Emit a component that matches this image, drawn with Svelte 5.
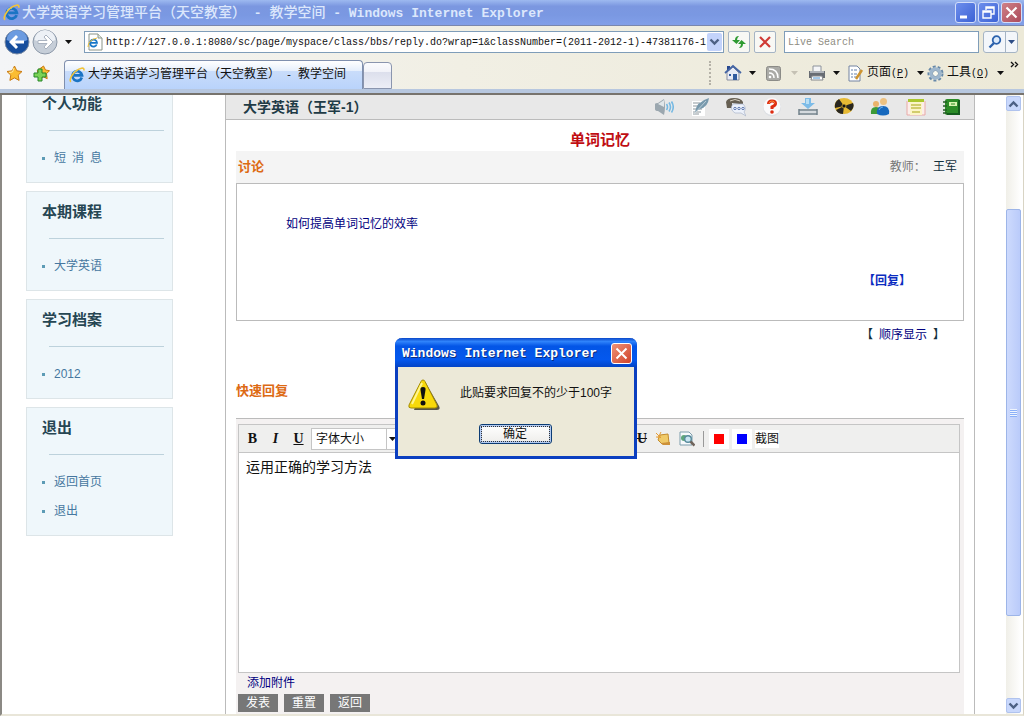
<script lang="ts">
	interface Card {
		title: string;
		links: string[];
	}

	const cards: Card[] = [
		{ title: '个人功能', links: ['短\u2002消\u2002息'] },
		{ title: '本期课程', links: ['大学英语'] },
		{ title: '学习档案', links: ['2012'] },
		{ title: '退出', links: ['返回首页', '退出'] }
	];

	const tools = [
		{ icon: 'speaker', label: '公告' },
		{ icon: 'note', label: '笔记' },
		{ icon: 'chat', label: '讨论' },
		{ icon: 'help', label: '答疑' },
		{ icon: 'download', label: '下载' },
		{ icon: 'radiation', label: '测试' },
		{ icon: 'people', label: '成员' },
		{ icon: 'list', label: '作业' },
		{ icon: 'book', label: '通讯录' }
	];

	let url = $state(
		'http://127.0.0.1:8080/sc/page/myspace/class/bbs/reply.do?wrap=1&classNumber=(2011-2012-1)-47381176-1'
	);
	let query = $state('');
	let reply = $state('运用正确的学习方法');
	let alertOpen = $state(true);

	function submit() {
		if (reply.length < 100) alertOpen = true;
	}
</script>

{#snippet ieLogo(size: number)}
	<svg width={size} height={size} viewBox="0 0 16 16" aria-hidden="true">
		<path d="M12.800 10.500A4.800 4.800 0 1 1 13 8.300H5" fill="none" stroke="#1b74c4" stroke-width="2.700" />
		<path d="M4 6.200q1.500-2.500 4.500-2.500" fill="none" stroke="#8fd4f7" stroke-width="1.200" />
		<path d="M2 14.800C-1 13 5 3 12.500 1.200q3-.6 2.300 2.300" fill="none" stroke="#f1c33a" stroke-width="1.600" />
	</svg>
{/snippet}

{#snippet caret(color: string)}
	<svg class="caret" width="7" height="4" viewBox="0 0 7 4" aria-hidden="true">
		<path d="M0 0h7L3.500 4z" fill={color} />
	</svg>
{/snippet}

{#snippet chevron(down: boolean)}
	<svg width="11" height="8" viewBox="0 0 11 8" aria-hidden="true">
		<path d={down ? 'M1.500 1.500l4 4 4-4' : 'M1.500 6.500l4-4 4 4'} fill="none" stroke="#4d6185" stroke-width="2.400" />
	</svg>
{/snippet}

{#snippet toolIcon(name: string)}
	<svg width="20" height="20" viewBox="0 0 20 20" aria-hidden="true">
		{#if name === 'speaker'}
			<path d="M1 7q0-1 3-1l6-4q2 8 0 16l-6-4q-3 0-3-2z" fill="#9ba7af" />
			<path d="M4 7l6-4v7z" fill="#e0e6e9" />
			<path d="M12.500 7q2 3 0 6M15 5.500q3 4.500 0 9M17.500 4.500q3.500 5.500 0 11" fill="none" stroke="#76b9e3" stroke-width="1.600" />
		{:else if name === 'note'}
			<path d="M2 4h13v15H2z" fill="#fff" />
			<path d="M3 6h7M3 9h8M3 12h9M3 15h8M3 17h6" stroke="#8d979d" />
			<path d="M5 15Q6 5 19 1q-1 9-9 11z" fill="#7899ac" />
			<path d="M4 17L16 4" stroke="#cbdbe3" stroke-width=".8" />
		{:else if name === 'chat'}
			<path d="M0 5q1-4 8-4t9 4v2h-4L6 6v5H1z" fill="#665f52" />
			<path d="M4 4q5-3 10 0" stroke="#d6cfc0" fill="none" />
			<path d="M7 7h10q4 4 1 8l2 4-5-3H9q-6-4-2-9z" fill="#edf2fb" stroke="#a9b5ca" stroke-width=".7" />
			<circle cx="9" cy="11.500" r="1.200" fill="#fff" stroke="#5874ae" />
			<circle cx="13" cy="11.500" r="1.200" fill="#fff" stroke="#5874ae" />
			<circle cx="17" cy="11.500" r="1.200" fill="#fff" stroke="#5874ae" />
		{:else if name === 'help'}
			<circle cx="10" cy="10.500" r="9" fill="#dde0e4" />
			<circle cx="10" cy="9.500" r="8.500" fill="#fafafb" />
			<path d="M6.500 7q0-3 3.500-3t3.500 2.500q0 2-3.500 3.500v2" fill="none" stroke="#dd2c12" stroke-width="3" />
			<path d="M7 6.500Q7.500 4 10 4t3 2.500" fill="none" stroke="#ff9d3d" stroke-width=".8" />
			<circle cx="10" cy="15" r="1.800" fill="#dd2c12" />
		{:else if name === 'download'}
			<path d="M7 1h6v5h4l-7 6-7-6h4z" fill="#7dbce8" />
			<path d="M8 2h3v5H8z" fill="#b9dff5" />
			<path d="M1 13h18M1 17h18" stroke="#71818b" stroke-width="1.500" />
			<path d="M2 15h16" stroke="#d5dade" stroke-width="2" />
			<path d="M1 12v6M19 12v6" stroke="#71818b" stroke-width="1.500" />
		{:else if name === 'radiation'}
			<ellipse cx="10" cy="9" rx="9.500" ry="8" fill="#e6b933" />
			<path d="M10 9L1 11q-1-6 4-9zM10 9l9-3q2 4-2 8zM10 9l-1 8q-5 0-7-4z" fill="#292720" />
			<circle cx="10" cy="9" r="2" fill="#141414" stroke="#e6b933" stroke-width=".7" />
		{:else if name === 'people'}
			<circle cx="6" cy="7" r="3" fill="#e9b36c" />
			<path d="M1 17q-1-7 5-7t6 7z" fill="#3d9a37" />
			<circle cx="13.500" cy="4.500" r="3.500" fill="#ecc181" />
			<path d="M7 17q-1-8 6-8t6 8q-6 3-12 0z" fill="#1668bd" />
			<path d="M9 13q1-3 4-3" stroke="#68b1ee" fill="none" />
		{:else if name === 'list'}
			<path d="M1 4v14h18V4" fill="#fbeeea" stroke="#e9aaa8" />
			<path d="M4 3h12v15H4z" fill="#fcf5c8" />
			<path d="M2 2h16v3H2z" fill="#abc72e" />
			<path d="M5 8h10M5 11h10M6 15h8" stroke="#c3c04d" stroke-width="1.500" />
		{:else}
			<rect x="3" y="2" width="15" height="16" rx="2" fill="#2c8c27" />
			<path d="M17 3v14H5" fill="none" stroke="#155e1d" stroke-width="2" />
			<path d="M7 5h8v4H7z" fill="#d7f3af" />
			<path d="M9 7h4" stroke="#2c8c27" />
			<path d="M1 5h4M1 9h4M1 13h4M1 16h4" stroke="#245c26" stroke-width="1.500" />
		{/if}
	</svg>
{/snippet}

<div class="window">
	<header class="titlebar">
		{@render ieLogo(17)}
		<h1>大学英语学习管理平台（天空教室）<span>&nbsp;-&nbsp;</span>教学空间<span>&nbsp;-&nbsp;Windows Internet Explorer</span></h1>
		<div class="window-buttons">
			<button type="button" aria-label="最小化">
				<svg width="19" height="19" viewBox="0 0 19 19"><path d="M4 14h7" stroke="#fff" stroke-width="3" /></svg>
			</button>
			<button type="button" aria-label="还原">
				<svg width="19" height="19" viewBox="0 0 19 19"><path d="M7 7V4h8v7h-3M4 8h8v7H4zM4 9h8M7 5h8" fill="none" stroke="#fff" stroke-width="1.400" /></svg>
			</button>
			<button type="button" class="close" aria-label="关闭">
				<svg width="19" height="19" viewBox="0 0 19 19"><path d="M4.500 4.500l10 10m0-10l-10 10" stroke="#fff" stroke-width="2.200" /></svg>
			</button>
		</div>
	</header>

	<div class="chrome">
		<div class="address-row">
			<div class="nav">
				<button type="button" aria-label="后退">
					<svg width="26" height="26" viewBox="0 0 26 26">
						<circle cx="13" cy="13" r="12" fill="#174e9d" stroke="#7d8da5" />
						<path d="M2.500 11a10.500 10 0 0 1 21 0q-10 5-21 0z" fill="#6b9be0" />
						<path d="M5 13l7-7 2 2-3 3.500h9v3h-9l3 3.500-2 2z" fill="#fff" />
					</svg>
				</button>
				<button type="button" aria-label="前进">
					<svg width="26" height="26" viewBox="0 0 26 26">
						<circle cx="13" cy="13" r="12" fill="#c6ced8" stroke="#8c98a8" />
						<path d="M2.500 11a10.500 10 0 0 1 21 0q-10 5-21 0z" fill="#edf1f6" />
						<path d="M21 13l-7-7-2 2 3 3.500H6v3h9l-3 3.500 2 2z" fill="#fff" stroke="#aab3c0" />
					</svg>
				</button>
				<button type="button" class="history" aria-label="历史记录">{@render caret('#111')}</button>
			</div>
			<div class="address">
				<svg class="page-icon" width="17" height="18" viewBox="0 0 17 18" aria-hidden="true">
					<path d="M3 1h9l4 4v12H3z" fill="#fff" stroke="#8a9488" />
					<path d="M12 1v4h4" fill="#e1eadb" stroke="#8a9488" />
					<path d="M10.700 11.500A3.500 3.500 0 1 1 11 9.800H5" fill="none" stroke="#1676c8" stroke-width="1.800" />
					<path d="M2 14Q2 7 11 5" fill="none" stroke="#edbf35" />
				</svg>
				<input type="text" aria-label="地址" bind:value={url} />
				<button type="button" aria-label="展开地址">{@render chevron(true)}</button>
			</div>
			<button type="button" class="square" aria-label="刷新">
				<svg width="16" height="16" viewBox="0 0 16 16"><path d="M8 2q-4 0-4 4H1l4.500 4L9 6H6q0-2 2-4zM8 14q4 0 4-4h3l-4.500-4L7 10h3q0 2-2 4z" fill="#2f9b32" /></svg>
			</button>
			<button type="button" class="square" aria-label="停止">
				<svg width="14" height="14" viewBox="0 0 14 14"><path d="M2 2l10 10M12 2L2 12" stroke="#cf3a35" stroke-width="2.200" /></svg>
			</button>
			<input class="search" type="text" placeholder="Live Search" aria-label="搜索" bind:value={query} />
			<div class="search-buttons">
				<button type="button" aria-label="搜索">
					<svg width="14" height="14" viewBox="0 0 14 14"><circle cx="8.500" cy="5" r="3.800" fill="#dceafb" stroke="#2c62ad" stroke-width="1.800" /><path d="M6 8l-4.500 4.500" stroke="#2c62ad" stroke-width="2.400" /></svg>
				</button>
				<button type="button" aria-label="搜索选项">{@render caret('#2d4d86')}</button>
			</div>
		</div>

		<div class="tab-row">
			<div class="favorites">
				<button type="button" aria-label="收藏中心">
					<svg width="17" height="17" viewBox="0 0 17 17"><path d="M8.500 1l2.300 4.800 5.200.7-3.800 3.600.9 5.300-4.600-2.500-4.600 2.500.9-5.300L1 6.500l5.200-.7z" fill="#fbbd32" stroke="#c97a13" /><path d="M8 3L6.500 7 3 7.500" stroke="#ffeaa0" fill="none" /></svg>
				</button>
				<button type="button" aria-label="添加到收藏夹">
					<svg width="17" height="17" viewBox="0 0 17 17"><path d="M10.500 1l2 4 4 .7-3 3 .7 5-4-2-3 2-3-8z" fill="#fbbd32" stroke="#c97a13" /><path d="M5 4h4v4h4v4H9v4H5v-4H1V8h4z" fill="#7bd255" stroke="#278728" /></svg>
				</button>
			</div>
			<div class="tab">
				{@render ieLogo(16)}
				<span class="tab-title">大学英语学习管理平台（天空教室）<span>&nbsp;-&nbsp;</span>教学空间</span>
			</div>
			<button type="button" class="new-tab" aria-label="新选项卡"></button>
			<div class="commands">
				<button type="button" class="home" aria-label="主页">
					<svg width="18" height="18" viewBox="0 0 18 18"><path d="M3 2h3v6H3z" fill="#27488e" /><path d="M3 8l6-5 6 6v7H3z" fill="#e8ebf5" stroke="#8a8fa0" /><path d="M1 9l8-7 8 7" fill="none" stroke="#4465a4" stroke-width="1.800" /><path d="M9 10h4v6H9z" fill="#315b9f" /><path d="M5 10h2v2H5z" fill="#315b9f" /></svg>
					{@render caret('#111')}
				</button>
				<button type="button" class="feed" aria-label="源">
					<svg width="15" height="15" viewBox="0 0 15 15"><rect x=".5" y=".5" width="14" height="14" rx="2" fill="#aaaaa6" stroke="#8b8b87" /><path d="M3 7q5 0 5 5M3 3q9 0 9 9" fill="none" stroke="#fff" stroke-width="1.500" /><circle cx="4" cy="11" r="1.300" fill="#fff" /></svg>
					{@render caret('#c5c1b4')}
				</button>
				<button type="button" class="print" aria-label="打印">
					<svg width="18" height="18" viewBox="0 0 18 18"><path d="M5 2h8v6H5z" fill="#f4f5f7" stroke="#8c929b" /><path d="M1 7h16v7H1z" fill="#686c73" /><path d="M2 8h14" stroke="#aeb2b8" stroke-width="2" /><path d="M4 12h10l1 4H3z" fill="#fff" stroke="#84878c" /><path d="M5 14h7" stroke="#4d91cf" /></svg>
					{@render caret('#111')}
				</button>
				<button type="button" class="page">
					<svg width="17" height="17" viewBox="0 0 17 17" aria-hidden="true"><path d="M2 1h8l3 3v12H2z" fill="#fff" stroke="#7283a1" /><path d="M4 5h2m1 0h3M4 9h2m1 0h3M4 12h2m1 0h3" stroke="#6480ad" /><path d="M15 5l-6 9" stroke="#cf942f" stroke-width="2.500" /></svg>
					<span>页面<i>(<u>P</u>)</i></span>
					{@render caret('#111')}
				</button>
				<button type="button" class="extras">
					<svg width="17" height="17" viewBox="0 0 17 17" aria-hidden="true"><circle cx="8.500" cy="8.500" r="7" fill="none" stroke="#6688a8" stroke-width="2" stroke-dasharray="3 2" /><circle cx="8.500" cy="8.500" r="4.700" fill="#f3f6f9" stroke="#9db6cd" stroke-width="3" /><circle cx="8.500" cy="8.500" r="3" fill="#faf9ee" stroke="#7895af" /></svg>
					<span>工具<i>(<u>O</u>)</i></span>
					{@render caret('#111')}
				</button>
				<button type="button" class="more" aria-label="更多">
					<svg width="9" height="8" viewBox="0 0 9 8"><path d="M1 1l2.500 2.500L1 6M5 1l2.500 2.500L5 6" fill="none" stroke="#111" stroke-width="1.400" /></svg>
				</button>
			</div>
		</div>
	</div>

	<div class="viewport">
		<div class="document">
			<nav class="sidebar">
				{#each cards as card}
					<section class="card">
						<h2>{card.title}</h2>
						<ul>
							{#each card.links as link}
								<li><a href="#top">{link}</a></li>
							{/each}
						</ul>
					</section>
				{/each}
			</nav>

			<main>
				<div class="course-bar">
					<h2>大学英语（王军-1）</h2>
					<div class="tools">
						{#each tools as tool}
							<button type="button" aria-label={tool.label}>{@render toolIcon(tool.icon)}</button>
						{/each}
					</div>
				</div>
				<div class="board">
					<h3 class="topic">单词记忆</h3>
					<div class="discussion-head">
						<h4>讨论</h4>
						<p>教师： <b>王军</b></p>
					</div>
					<article>
						<a class="question" href="#topic">如何提高单词记忆的效率</a>
						<a class="answer" href="#reply">【回复】</a>
					</article>
					<p class="order">【&ensp;<a href="#order">顺序显示</a>&ensp;】</p>
					<h4 class="quick-title">快速回复</h4>
					<form class="quick" id="reply" onsubmit={(e) => { e.preventDefault(); submit(); }}>
						<div class="editor">
							<div class="editor-bar">
								<button type="button" class="bold" aria-label="粗体">B</button>
								<button type="button" class="italic" aria-label="斜体">I</button>
								<button type="button" class="underline" aria-label="下划线">U</button>
								<span class="size">
									<select aria-label="字体大小"><option>字体大小</option></select>
									{@render caret('#111')}
								</span>
								<button type="button" class="strike" aria-label="删除线">U</button>
								<button type="button" class="insert" aria-label="清除格式">
									<svg width="16" height="16" viewBox="0 0 16 16"><path d="M5 4l8-1 1 9-7 1-4-4z" fill="#f0ca68" stroke="#c38b2e" /><path d="M6 12l9-1v3H8z" fill="#cd9139" /><path d="M1 2l5 5M6 1L3 7M1 6h5" stroke="#e59d35" /></svg>
								</button>
								<button type="button" class="insert" aria-label="预览">
									<svg width="16" height="16" viewBox="0 0 16 16"><path d="M1 1h9l3 3v10H1z" fill="#f7fafc" stroke="#7d9dac" /><circle cx="5" cy="7" r="3" fill="#5da67c" /><circle cx="9" cy="8" r="3.300" fill="#c9e6f2" stroke="#568a9b" stroke-width="1.400" /><path d="M11.500 10.500l4 4" stroke="#70645b" stroke-width="2.500" /></svg>
								</button>
								<span class="divider"></span>
								<button type="button" class="swatch red" aria-label="红色"></button>
								<button type="button" class="swatch blue" aria-label="蓝色"></button>
								<button type="button" class="shot">截图</button>
							</div>
							<textarea aria-label="回复内容" bind:value={reply}></textarea>
						</div>
						<a class="attach" href="#attach">添加附件</a>
						<div class="actions">
							<button type="submit">发表</button>
							<button type="reset">重置</button>
							<button type="button">返回</button>
						</div>
					</form>
				</div>
			</main>
		</div>

		<div class="scrollbar">
			<button type="button" aria-label="向上滚动">{@render chevron(false)}</button>
			<div class="track"><div class="thumb"><i></i></div></div>
			<button type="button" aria-label="向下滚动">{@render chevron(true)}</button>
		</div>
	</div>

	{#if alertOpen}
		<div class="alert" role="alertdialog" aria-labelledby="alert-title" aria-describedby="alert-text">
			<div class="alert-title">
				<h2 id="alert-title">Windows Internet Explorer</h2>
				<button type="button" aria-label="关闭对话框" onclick={() => (alertOpen = false)}>
					<svg width="19" height="19" viewBox="0 0 19 19"><path d="M4.500 4.500l10 10m0-10l-10 10" stroke="#fff" stroke-width="2" /></svg>
				</button>
			</div>
			<div class="alert-body">
				<div class="message">
					<svg width="32" height="32" viewBox="0 0 32 32" aria-hidden="true">
						<path d="M16 3q2 0 3 3l12 21q2 4-2 4H6z" fill="#565448" />
						<path d="M15 1q1.500 0 2 1.500L29 26q1 3-2 3H3q-3 0-2-3L13 2.500Q13.500 1 15 1z" fill="#f8d90b" stroke="#a48c05" />
						<path d="M14 4L4 25" stroke="#fff58f" stroke-width="2" />
						<path d="M15 8q3 0 2.500 3L16 20h-2l-1.500-9Q12 8 15 8z" fill="#111" />
						<circle cx="15" cy="24" r="2.500" fill="#111" />
					</svg>
					<p id="alert-text">此贴要求回复不的少于100字</p>
				</div>
				<button type="button" class="ok" onclick={() => (alertOpen = false)}><span>确定</span></button>
			</div>
		</div>
	{/if}
</div>

<style>
	:global(body) {
		margin: 0;
	}

	.window {
		--mono: 'Liberation Mono', 'Noto Sans CJK SC', monospace;
		position: relative;
		display: flex;
		flex-direction: column;
		height: 100vh;
		overflow: hidden;
		background: #fff;
		color: #111;
		font: 12px/16px 'Liberation Sans', 'Noto Sans CJK SC', sans-serif;
	}

	.window * {
		box-sizing: border-box;
	}

	h1, h2, h3, h4, p, ul {
		margin: 0;
		padding: 0;
	}

	button, input, select, textarea {
		margin: 0;
		padding: 0;
		border: 0;
		border-radius: 0;
		background: none;
		color: inherit;
		font: inherit;
	}

	button {
		display: flex;
		align-items: center;
		justify-content: center;
		flex: none;
	}

	svg {
		display: block;
		flex: none;
	}

	a {
		color: #000080;
		text-decoration: none;
	}

	.titlebar {
		display: flex;
		align-items: center;
		flex: none;
		height: 26px;
		padding: 0 2px 0 3px;
		border-bottom: 1px solid #7a87ad;
		background: linear-gradient(#9db9f0, #7b97e0 25%, #7a98e2 60%, #829fe8);
	}

	.titlebar h1 {
		flex: 1;
		margin-left: 2px;
		overflow: hidden;
		color: #dce7fc;
		font-size: 14px;
		font-weight: 500;
		line-height: 20px;
		white-space: nowrap;
	}

	.titlebar h1 span {
		font-family: var(--mono);
		font-size: 13px;
		font-weight: 700;
	}

	.window-buttons {
		display: flex;
		gap: 2px;
	}

	.window-buttons button {
		width: 21px;
		height: 21px;
		border: 1px solid #d3defa;
		border-radius: 3px;
		background: linear-gradient(135deg, #6d8eec, #3c62d5);
	}

	.window-buttons .close {
		background: linear-gradient(135deg, #cf8187, #ac4b5c);
	}

	.chrome {
		flex: none;
		border-bottom: 2px solid #77736d;
		background: linear-gradient(90deg, #f4f5f7, #f1efe4 45%, #ece9d8);
	}

	.address-row {
		display: flex;
		align-items: center;
		height: 32px;
		padding: 0 6px 0 4px;
	}

	.nav {
		display: flex;
		align-items: center;
		width: 80px;
		gap: 2px;
	}

	.history {
		width: 16px;
		height: 20px;
	}

	.address {
		display: flex;
		align-items: center;
		flex: 1;
		height: 22px;
		border: 1px solid #7f9db9;
		background: #fff;
	}

	.page-icon {
		margin: 0 3px 0 1px;
	}

	.address input {
		flex: 1;
		min-width: 0;
		height: 20px;
		font-family: var(--mono);
		font-size: 10px;
	}

	.address button {
		width: 15px;
		height: 18px;
		margin-right: 1px;
		border-radius: 2px;
		background: #c3d3fb;
	}

	.square {
		width: 22px;
		height: 22px;
		margin-left: 4px;
		border: 1px solid #a5b4c4;
		border-radius: 2px;
		background: #f8f8f4;
	}

	.search {
		width: 195px;
		height: 22px;
		margin-left: 8px;
		padding-left: 3px;
		border: 1px solid #7f9db9;
		background: #fff;
		font-family: var(--mono);
		font-size: 10px;
	}

	.search::placeholder {
		color: #8e8c82;
		opacity: 1;
	}

	.search-buttons {
		display: flex;
		height: 22px;
		margin-left: 4px;
		border: 1px solid #a5b4c4;
		border-radius: 3px;
		background: #f3f6fa;
	}

	.search-buttons button {
		width: 21px;
	}

	.search-buttons button + button {
		width: 12px;
		border-left: 1px solid #a5b4c4;
	}

	.tab-row {
		display: flex;
		align-items: flex-end;
		height: 35px;
		border-bottom: 4px solid #b7c7df;
	}

	.favorites {
		display: flex;
		align-items: center;
		gap: 10px;
		width: 64px;
		height: 32px;
		padding-left: 6px;
	}

	.tab {
		display: flex;
		align-items: center;
		gap: 3px;
		width: 299px;
		height: 29px;
		padding-left: 4px;
		border: 1px solid #7f8fae;
		border-bottom: 0;
		border-radius: 4px 4px 0 0;
		background: linear-gradient(#fff, #e6effc 35%, #c9dcfa 36%, #b9d3fb);
		white-space: nowrap;
	}

	.tab-title span {
		font-family: var(--mono);
		font-size: 10px;
	}

	.new-tab {
		width: 29px;
		height: 27px;
		border: 1px solid #8a95ae;
		border-radius: 4px 4px 0 0;
		background: linear-gradient(#fbfbfd, #f2f3f9 35%, #dcdfec 36%, #eceef6);
	}

	.commands {
		display: flex;
		align-items: center;
		height: 24px;
		margin: 0 4px 4px auto;
		padding-left: 13px;
		border-left: 2px dotted #b5b2a8;
	}

	.commands button {
		justify-content: flex-start;
		height: 22px;
	}

	.commands i {
		font-family: var(--mono);
		font-size: 10px;
		font-style: normal;
	}

	.commands span {
		margin: 0 8px 0 3px;
		white-space: nowrap;
	}

	.home {
		gap: 7px;
		width: 42px;
	}

	.feed {
		gap: 10px;
		width: 42px;
	}

	.print {
		gap: 7px;
		width: 39px;
	}

	.page {
		width: 80px;
	}

	.extras {
		width: 83px;
	}

	.more {
		align-self: flex-start;
		width: 10px;
	}

	.commands .more {
		height: 8px;
	}

	.viewport {
		display: flex;
		flex: 1;
		min-height: 0;
		padding-right: 2px;
		border-left: 2px solid #8b8984;
		border-right: 1px solid #d8d4c4;
		border-bottom: 2px solid #e9e6d9;
	}

	.document {
		display: flex;
		flex: 1;
		min-width: 0;
		padding: 0 31px 0 24px;
		overflow: hidden;
	}

	.sidebar {
		display: flex;
		flex-direction: column;
		flex: none;
		gap: 8px;
		width: 147px;
		margin: -12px 52px 0 0;
	}

	.card {
		padding: 10px 8px 16px 15px;
		border: 1px solid #dde5e8;
		background: #eff7fb;
	}

	.card h2 {
		color: #264653;
		font-size: 15px;
		line-height: 20px;
	}

	.card ul {
		margin: 16px 0 0 7px;
		padding-top: 19px;
		border-top: 1px solid #bdd2dc;
		list-style: none;
	}

	.card li {
		display: flex;
		align-items: center;
		gap: 9px;
		height: 16px;
		margin-left: -7px;
	}

	.card li + li {
		margin-top: 13px;
	}

	.card li::before {
		width: 3px;
		height: 3px;
		background: #5c9bb5;
		content: '';
	}

	.card a {
		color: #4677a0;
	}

	main {
		flex: 1;
		min-width: 0;
		border: 1px solid #bbb;
		border-width: 0 1px;
	}

	.course-bar {
		display: flex;
		align-items: center;
		justify-content: space-between;
		height: 25px;
		padding: 0 12px 0 17px;
		border-bottom: 1px solid #bbb;
		background: #e8e8e8;
	}

	.course-bar h2 {
		color: #1f3b46;
		font-size: 14px;
		line-height: 20px;
	}

	.tools {
		display: flex;
		gap: 16px;
	}

	.board {
		padding: 9px 10px 0;
	}

	.topic {
		color: #c00d12;
		font-size: 15px;
		line-height: 22px;
		text-align: center;
	}

	.discussion-head {
		display: flex;
		align-items: center;
		justify-content: space-between;
		height: 32px;
		padding: 0 7px 0 2px;
		background: #f4f4f4;
		color: #777;
	}

	.discussion-head b {
		margin-left: 4px;
		color: #12303c;
		font-weight: 400;
	}

	h4 {
		color: #dd6a14;
		font-size: 13px;
		line-height: 18px;
	}

	article {
		display: flex;
		flex-direction: column;
		justify-content: space-between;
		height: 138px;
		padding: 32px 52px 31px 49px;
		border: 1px solid #bbb;
	}

	.answer {
		align-self: flex-end;
		color: #0b2cc0;
		font-weight: 700;
	}

	.order {
		margin: 6px 19px 0 0;
		color: #12303c;
		text-align: right;
	}

	.quick-title {
		margin-top: 39px;
	}

	.quick {
		margin-top: 18px;
		padding: 5px 4px 20px 2px;
		border-top: 1px solid #bbb;
		background: #f4f1f1;
	}

	.editor {
		display: flex;
		flex-direction: column;
		border: 1px solid #c5c5c5;
	}

	.editor-bar {
		display: flex;
		align-items: center;
		height: 28px;
		padding-left: 2px;
		border-bottom: 1px solid #c5c5c5;
		background: #efefee;
	}

	.bold, .italic, .underline, .strike {
		width: 23px;
		height: 20px;
		font-family: 'Liberation Serif', serif;
		font-size: 14px;
		font-weight: 700;
	}

	.italic {
		font-style: italic;
	}

	.underline {
		text-decoration: underline;
	}

	.strike {
		width: 16px;
		margin-left: 235px;
		text-decoration: line-through;
	}

	.size {
		display: flex;
		align-items: center;
		height: 22px;
		margin-left: 1px;
		border: 1px solid #c5c5c5;
		background: #fff;
	}

	.size select {
		width: 75px;
		height: 20px;
		padding-left: 4px;
		appearance: none;
		border-right: 1px solid #c5c5c5;
	}

	.size :global(.caret) {
		margin: 0 2px;
	}

	.insert {
		width: 22px;
		height: 20px;
		margin-left: 2px;
	}

	.divider {
		width: 1px;
		height: 16px;
		margin: 0 5px;
		background: #999;
	}

	.swatch {
		width: 20px;
		height: 20px;
		margin-right: 3px;
		border: 5px solid #fff;
	}

	.red {
		background: #f00;
	}

	.blue {
		background: #00f;
	}

	.shot {
		height: 18px;
		background: #fff;
	}

	textarea {
		height: 219px;
		padding: 4px 8px 4px 7px;
		outline: 0;
		background: #fff;
		font-size: 14px;
		line-height: 20px;
		resize: none;
	}

	.attach {
		display: block;
		margin: 2px 0 3px 9px;
	}

	.actions {
		display: flex;
		gap: 6px;
	}

	.actions button {
		width: 40px;
		height: 18px;
		background: #777;
		color: #fff;
	}

	.scrollbar {
		display: flex;
		flex-direction: column;
		flex: none;
		width: 15px;
		padding: 1px 0;
		background: linear-gradient(90deg, #f0efe8, #fff);
	}

	.scrollbar button {
		height: 15px;
		border: 1px solid #b0c3ee;
		border-radius: 2px;
		background: #c9d8fc;
	}

	.track {
		display: flex;
		flex-direction: column;
		flex: 1;
		padding: 98px 0 82px;
	}

	.thumb {
		display: flex;
		align-items: center;
		justify-content: center;
		flex: 1;
		border: 1px solid #9db5e8;
		border-radius: 2px;
		background: linear-gradient(90deg, #cddafd, #bacbfa);
	}

	.thumb i {
		width: 7px;
		height: 8px;
		background: repeating-linear-gradient(#eef4fe 0 1px, #8cb0f8 1px 2px);
	}

	.alert {
		position: absolute;
		top: 338px;
		left: 395px;
		width: 242px;
		border: 3px solid #0b3fc0;
		border-top: 0;
		border-radius: 7px 7px 0 0;
		background: #ece9d8;
	}

	.alert-title {
		display: flex;
		align-items: center;
		justify-content: space-between;
		height: 29px;
		margin: 0 -3px;
		padding: 2px 5px 0 7px;
		border-radius: 7px 7px 0 0;
		background: linear-gradient(#0a47c8, #2f83fb 12%, #0355e6 28%, #0458ee 75%, #0344c6);
		color: #fff;
	}

	.alert-title h2 {
		font-family: var(--mono);
		font-size: 13px;
		text-shadow: 1px 1px #0a2d7d;
		white-space: nowrap;
	}

	.alert-title button {
		width: 21px;
		height: 21px;
		border: 1px solid #fff;
		border-radius: 3px;
		background: linear-gradient(135deg, #ee9277, #d0432a);
	}

	.alert-body {
		display: flex;
		flex-direction: column;
		align-items: center;
		padding: 12px 12px 12px 10px;
	}

	.message {
		display: flex;
		align-self: stretch;
		gap: 20px;
	}

	.message p {
		margin-top: 6px;
		white-space: nowrap;
	}

	.ok {
		width: 73px;
		height: 20px;
		margin-top: 13px;
		padding: 1px;
		border: 1px solid #0c3c74;
		border-radius: 3px;
		background: linear-gradient(#fff, #eeedea);
		box-shadow: inset 0 0 0 2px #b3caf0;
	}

	.ok span {
		flex: 1;
		border: 1px dotted #333;
		line-height: 14px;
	}
</style>
